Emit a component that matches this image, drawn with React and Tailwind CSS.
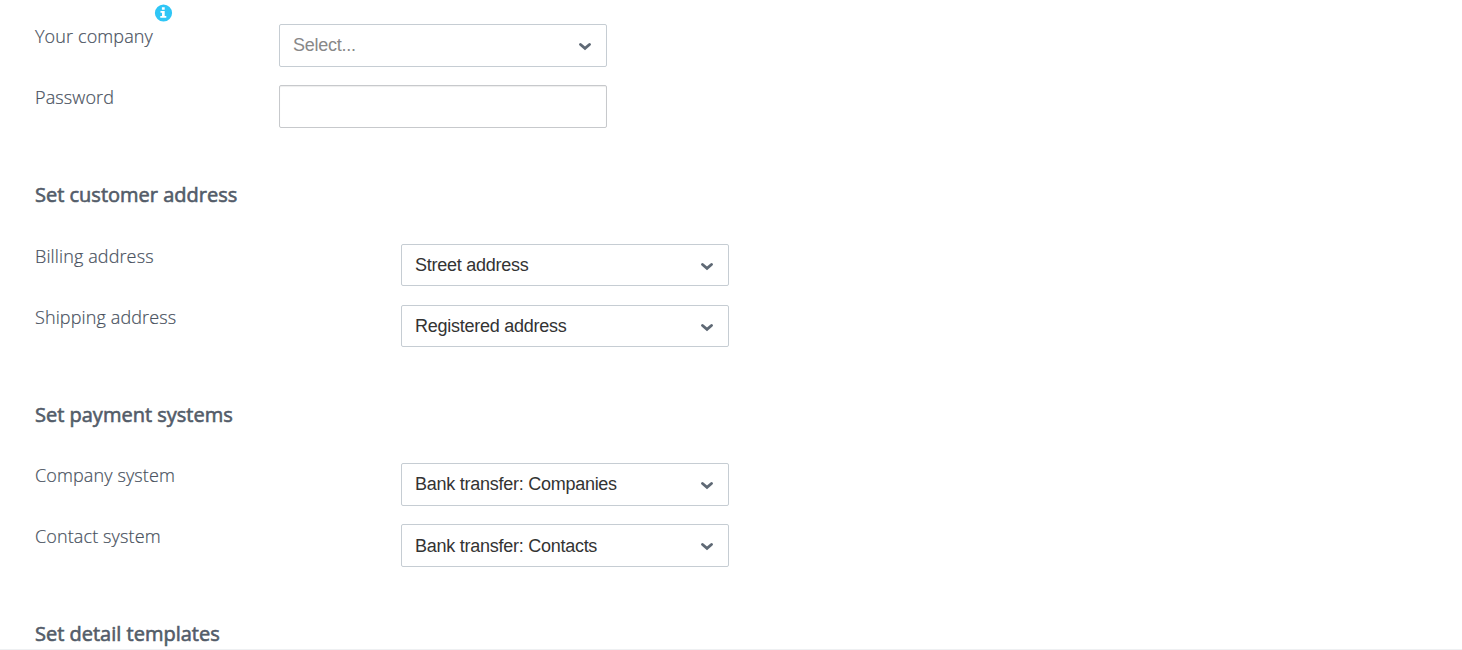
const Chevron = () => (
  <svg className="mt-px mr-[14px] h-[9px] w-[14px] shrink-0" viewBox="0 0 14 9" fill="none" stroke="#5f6975" strokeWidth="2.9" strokeLinecap="round">
    <path d="M2.5 2.5 L7 6.3 L11.5 2.5" />
  </svg>
);

const Select = ({ children, className = "", textClass = "pt-2" }) => (
  <div className={`flex w-[328px] justify-between rounded-[2px] border border-[#c6cdd3] bg-white pl-[13px] font-['Liberation_Sans',Arial,sans-serif] text-[18px] leading-[24px] font-normal tracking-[-0.26px] ${className}`}>
    <span className={textClass}>{children}</span>
    <span className="flex h-[42px] items-center">
      <Chevron />
    </span>
  </div>
);

const Row = ({ label, labelWidth, className, children }) => (
  <div className={`flex items-start ${className}`}>
    <label className={`shrink-0 text-[18px] leading-[24px] tracking-[0.12px] text-[#434c59] [-webkit-text-stroke:0.2px_#535c69] ${labelWidth}`}>{label}</label>
    {children}
  </div>
);

const Heading = ({ children, className }) => (
  <h2 className={`text-[20px] leading-[28px] font-normal text-[#535c69] [-webkit-text-stroke:0.6px_#535c69] ${className}`}>{children}</h2>
);

export default function App() {
  return (
    <main className="relative flex h-[650px] w-full flex-col overflow-hidden border-b border-[#eef0f2] bg-white pt-6 pl-[35px] font-['Open_Sans',sans-serif] font-light">
      <svg className="absolute top-1 left-[154px] h-[18px] w-[19px]" viewBox="-0.5 0 19 18">
        <circle cx="9" cy="9" r="8.6" fill="#2fc6f6" />
        <path d="M7.4 3.2h2.8v2.5H7.4zM6 7h4.2v4.9h1.6v1.8H5.8V11.9h1.7V8.8H6z" fill="white" />
      </svg>
      <Row label="Your company" labelWidth="w-[244px]" className="h-[61px]">
        <Select className="h-[43px] text-[#888]" textClass="pt-[7.5px]">Select...</Select>
      </Row>
      <Row label="Password" labelWidth="w-[244px]" className="h-[96px]">
        <input type="password" className="h-[43px] w-[328px] rounded-[2px] border border-[#c7c9cc] bg-white px-3 shadow-[inset_0_1px_1px_rgba(0,0,0,0.07)] outline-none" />
      </Row>
      <Heading className="h-[63px]">Set customer address</Heading>
      <Row label="Billing address" labelWidth="w-[366px]" className="h-[61px]">
        <Select className="h-[42px] text-[#333]">Street address</Select>
      </Row>
      <Row label="Shipping address" labelWidth="w-[366px]" className="h-[96px]">
        <Select className="h-[42px] text-[#333]">Registered address</Select>
      </Row>
      <Heading className="h-[62px]">Set payment systems</Heading>
      <Row label="Company system" labelWidth="w-[366px]" className="h-[61px]">
        <Select className="h-[43px] text-[#333]">Bank transfer: Companies</Select>
      </Row>
      <Row label="Contact system" labelWidth="w-[366px]" className="h-[96px]">
        <Select className="h-[43px] text-[#333]" textClass="pt-[9px]">Bank transfer: Contacts</Select>
      </Row>
      <Heading className="h-[28px]">Set detail templates</Heading>
    </main>
  );
}
